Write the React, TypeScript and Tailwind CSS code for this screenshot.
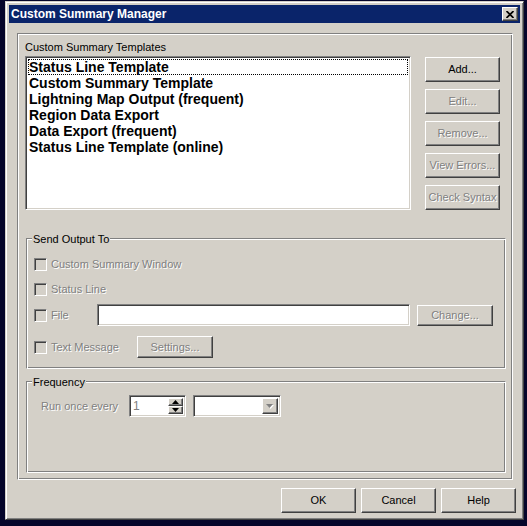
import React from "react";

const raised =
  "border border-t-white border-l-white border-r-[#404040] border-b-[#404040] shadow-[inset_-1px_-1px_0_#808080] bg-[#d4d0c8]";
const sunken =
  "border border-t-[#808080] border-l-[#808080] border-r-white border-b-white shadow-[inset_1px_1px_0_#404040,inset_-1px_-1px_0_#d4d0c8]";
const etched =
  "border border-t-[#808080] border-l-[#808080] border-r-white border-b-white shadow-[inset_1px_1px_0_#fff,inset_-1px_-1px_0_#808080]";
const dis = "text-[#808080] [text-shadow:1px_1px_0_#fff]";

function Btn({
  label,
  disabled,
  w = "w-[75px]",
  h = "h-[25px]",
}: {
  label: string;
  disabled?: boolean;
  w?: string;
  h?: string;
}) {
  return (
    <div
      className={`${raised} ${w} ${h} flex items-center justify-center text-[11px] leading-none whitespace-nowrap ${
        disabled ? dis : "text-black"
      }`}
    >
      {label}
    </div>
  );
}

function Check() {
  return <div className={`${sunken} w-[13px] h-[13px] bg-[#d4d0c8] shrink-0`} />;
}

function Group({
  title,
  className,
  children,
}: {
  title: string;
  className: string;
  children: React.ReactNode;
}) {
  return (
    <div className={`${etched} relative ml-[1px] w-[480px] ${className}`}>
      <span className="absolute left-[5px] -top-[7px] px-[1px] bg-[#d4d0c8] text-[11px] leading-[14px] text-black">
        {title}
      </span>
      {children}
    </div>
  );
}

const items = [
  "Status Line Template",
  "Custom Summary Template",
  "Lightning Map Output (frequent)",
  "Region Data Export",
  "Data Export (frequent)",
  "Status Line Template (online)",
];

export default function App() {
  return (
    <div className="w-[527px] h-[526px] bg-[#05052a] pl-[5px] pt-[1px] overflow-hidden font-['Liberation_Sans',Arial,sans-serif]">
      <div className="w-[519px] h-[519px] bg-[#d4d0c8] border border-t-[#d4d0c8] border-l-[#d4d0c8] border-r-[#404040] border-b-[#404040] shadow-[inset_1px_1px_0_#fff,inset_-1px_-1px_0_#808080] p-[3px] flex flex-col">
        {/* Title bar */}
        <div className="h-[18px] bg-[#0a246a] flex items-center justify-between pl-[2px] pr-[2px] shrink-0">
          <span className="text-white font-bold text-[12px] leading-none">Custom Summary Manager</span>
          <div className={`${raised} w-[16px] h-[14px] flex items-center justify-center`}>
            <svg width="8" height="7" viewBox="0 0 8 7">
              <path d="M0.5 0 L7.5 7 M7.5 0 L0.5 7" stroke="#000" strokeWidth="1.7" />
            </svg>
          </div>
        </div>

        {/* Main frame */}
        <div className={`${etched} mt-[10px] ml-[8px] w-[496px] h-[447px] shrink-0 pt-[6px] pl-[7px] flex flex-col`}>
          <div className="text-[11px] leading-[14px] text-black">Custom Summary Templates</div>
          <div className="flex mt-[2px]">
            <div className={`${sunken} bg-white w-[386px] h-[154px] p-[2px]`}>
              {items.map((t, i) => (
                <div
                  key={t}
                  className={`h-[16px] leading-[16px] px-[1px] text-[14px] font-bold text-black whitespace-nowrap ${
                    i === 0 ? "outline outline-1 outline-dotted outline-black -outline-offset-1" : ""
                  }`}
                >
                  {t}
                </div>
              ))}
            </div>
            <div className="ml-[14px] mt-[1px] flex flex-col gap-[7px]">
              <Btn label="Add..." />
              <Btn label="Edit..." disabled />
              <Btn label="Remove..." disabled />
              <Btn label="View Errors..." disabled />
              <Btn label="Check Syntax" disabled />
            </div>
          </div>

          <Group title="Send Output To" className="mt-[28px] h-[131px] shrink-0">
            <div className="flex flex-col pl-[7px] pt-[19px]">
              <div className="flex items-center h-[13px]">
                <Check />
                <span className={`ml-[4px] text-[11px] leading-none ${dis}`}>Custom Summary Window</span>
              </div>
              <div className="flex items-center h-[13px] mt-[12px]">
                <Check />
                <span className={`ml-[4px] text-[11px] leading-none ${dis}`}>Status Line</span>
              </div>
              <div className="flex items-center h-[22px] mt-[8px]">
                <Check />
                <span className={`ml-[4px] w-[46px] text-[11px] leading-none ${dis}`}>File</span>
                <div className={`${sunken} bg-white w-[313px] h-[22px]`} />
                <div className="ml-[7px]">
                  <Btn label="Change..." disabled w="w-[76px]" h="h-[21px]" />
                </div>
              </div>
              <div className="flex items-center h-[22px] mt-[10px]">
                <Check />
                <span className={`ml-[4px] w-[86px] text-[11px] leading-none ${dis}`}>Text Message</span>
                <Btn label="Settings..." disabled w="w-[76px]" h="h-[22px]" />
              </div>
            </div>
          </Group>

          <Group title="Frequency" className="mt-[12px] h-[92px] shrink-0">
            <div className="flex items-center pl-[14px] pt-[13px]">
              <span className={`w-[88px] text-[11px] leading-none ${dis}`}>Run once every</span>
              <div className={`${sunken} bg-white w-[57px] h-[22px] flex items-stretch p-[2px]`}>
                <span className="flex-1 text-[12px] leading-[17px] pl-[1px] text-[#808080]">1</span>
                <div className="w-[15px] flex flex-col">
                  <div className={`${raised} flex-1 flex items-center justify-center`}>
                    <svg width="7" height="4" viewBox="0 0 7 4">
                      <path d="M3.5 0 L7 4 L0 4 Z" fill="#000" />
                    </svg>
                  </div>
                  <div className={`${raised} flex-1 flex items-center justify-center`}>
                    <svg width="7" height="4" viewBox="0 0 7 4">
                      <path d="M0 0 L7 0 L3.5 4 Z" fill="#000" />
                    </svg>
                  </div>
                </div>
              </div>
              <div className={`${sunken} bg-white ml-[7px] w-[88px] h-[22px] flex justify-end p-[2px]`}>
                <div className={`${raised} w-[16px] h-full flex items-center justify-center`}>
                  <svg width="8" height="5" viewBox="0 0 8 5">
                    <path d="M1 1 L8 1 L4.5 5 Z" fill="#fff" />
                    <path d="M0 0 L7 0 L3.5 4 Z" fill="#808080" />
                  </svg>
                </div>
              </div>
            </div>
          </Group>
        </div>

        {/* Bottom buttons */}
        <div className="flex justify-end gap-[5px] pr-[4px] mt-[8px]">
          <Btn label="OK" />
          <Btn label="Cancel" />
          <Btn label="Help" />
        </div>
      </div>
    </div>
  );
}
